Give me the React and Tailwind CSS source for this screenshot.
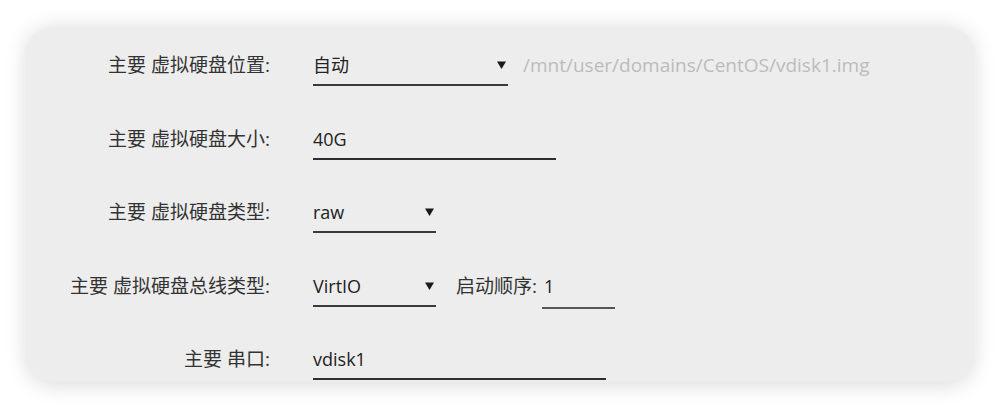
import React from 'react';

const font = { fontFamily: '"Open Sans", "Noto Sans CJK SC", sans-serif' };

function Caret() {
  return (
    <svg width="9" height="8" viewBox="0 0 9 8" className="shrink-0 mt-[8px]" aria-hidden>
      <path d="M0 0.5h9L4.5 8z" fill="#1a1a1a" />
    </svg>
  );
}

function Select({ value, width }) {
  return (
    <div className={`flex items-start justify-between pr-[2px] border-b-2 border-[#3a3a3a] pb-[7px] leading-[24px] ${width}`}>
      <span className="text-[#222]">{value}</span>
      <Caret />
    </div>
  );
}

function Field({ value, width }) {
  return (
    <div className={`border-b-2 border-[#2e2e2e] pb-[7px] leading-[24px] text-[#222] ${width}`}>
      {value}
    </div>
  );
}

function Row({ label, children, first }) {
  return (
    <div className={`flex items-end ${first ? '' : 'mt-[40.5px]'}`}>
      <div className="w-[243px] shrink-0 text-right text-[19px] leading-[24px] pb-[9px] text-[#333]">{label}</div>
      <div className="ml-[43px] flex items-end">{children}</div>
    </div>
  );
}

export default function App() {
  return (
    <div className="w-[1000px] h-[408px] bg-white pt-[27px] pl-[27px]" style={font}>
      <div className="w-[946px] h-[355px] rounded-[25px] bg-[#ededed] shadow-[0_2px_22px_rgba(0,0,0,0.16)] pt-[26px] text-[18px] overflow-hidden">
        <Row label="主要 虚拟硬盘位置:" first>
          <Select value="自动" width="w-[195px]" />
          <span className="ml-[15px] pb-[9px] text-[19px] leading-[24px] text-[#bcbcbc]">/mnt/user/domains/CentOS/vdisk1.img</span>
        </Row>

        <Row label="主要 虚拟硬盘大小:">
          <Field value="40G" width="w-[243px]" />
        </Row>

        <Row label="主要 虚拟硬盘类型:">
          <Select value="raw" width="w-[123px]" />
        </Row>

        <Row label="主要 虚拟硬盘总线类型:">
          <Select value="VirtIO" width="w-[123px]" />
          <span className="ml-[20px] pb-[9px] text-[19px] leading-[24px] text-[#333]">启动顺序:</span>
          <div className="ml-[5px] mb-[-2px] w-[73px] border-b-2 border-[#555] pb-[9px] pl-[2px] leading-[24px] text-[#222]">
            1
          </div>
        </Row>

        <Row label="主要 串口:">
          <Field value="vdisk1" width="w-[293px]" />
        </Row>
      </div>
    </div>
  );
}
